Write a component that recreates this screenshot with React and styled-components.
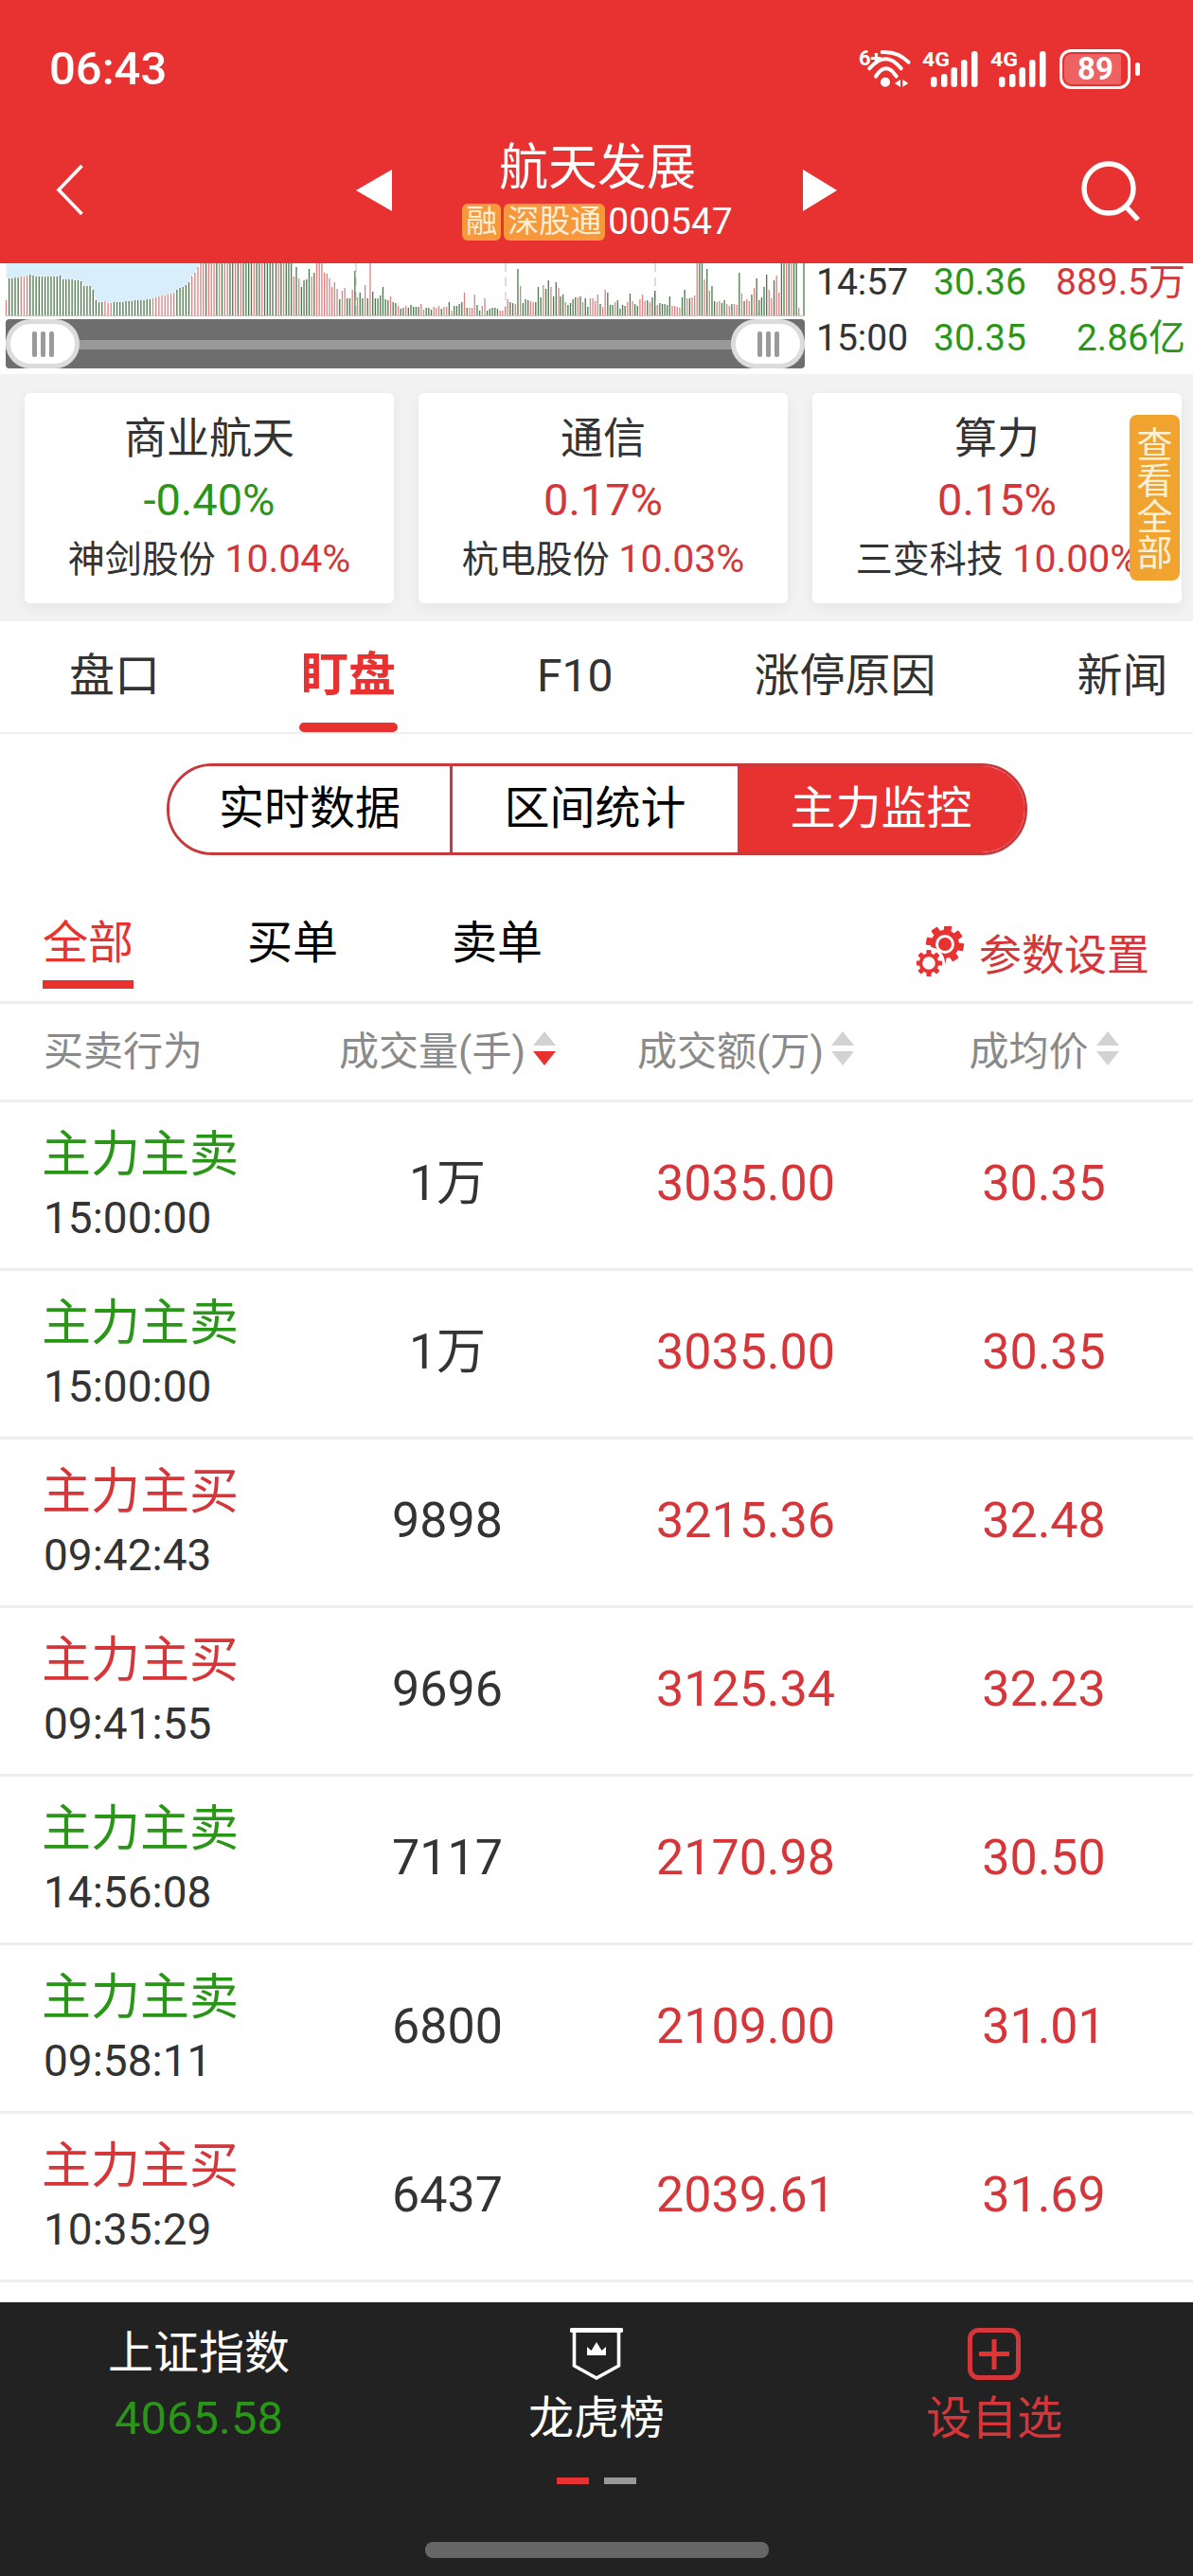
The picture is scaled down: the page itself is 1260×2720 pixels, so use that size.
import React from "react";
import styled, { createGlobalStyle } from "styled-components";

const RED = "#e83232";
const NUM_RED = "#d4363a";
const GREEN = "#2a9618";
const FONT = `Roboto, "Noto Sans CJK SC", sans-serif`;

// 分时量柱, negative = red bar
const BAR_SEGMENTS = [
  {
    from: 6.5,
    to: 209,
    bars: [
      -17, 40, 40, 41, 41, -42, -42, -43, 44, 43, 42, 42, 42, 42, 42, 42, 42, 42, 43, 39, 39, 39, 39, 38, 38, 37, 32, 32,
      32, 28, 17, 15, 15, -16, -14, -14, 15, 15, 15, 15, 16, 16, 16, 17, 17, 17, 17, 18, 18, -19, -20, -21, -22, -22, -23,
      -24, -25, 28, 30, 31, 33, 36, -42, -46, -52,
    ],
  },
  {
    from: 212,
    to: 288,
    bars: [
      -56, -56, 56, -56, -56, -56, 56, -56, 56, -56, -56, 56, 56, -56, 56, -56, 56, 56, 56, 56, -56, 56, 56, -56, 56, 56,
      56, 56,
    ],
  },
  {
    from: 291.5,
    to: 590,
    bars: [
      56, -56, 56, -56, 56, 56, 56, -42, 52, -40, 31, 38, 39, 50, -42, 46, -56, -56, -56, -46, -45, -40, -31, -36, -29, 18,
      -27, -30, 19, 19, -28, 48, -20, 25, 19, -33, 19, -56, 26, 19, 19, 22, 31, 18, 17, -21, 15, 14, -11, 8, 9, -11, 9, 12,
      10, 10, 10, -13, -7, 9, 9, 7, -10, -9, -11, 8, -10, -10, 15, -6, 11, 11, 13, 15, -25, 9, -9, -9, -23, 12, 6, -11, -19,
      6, 8, 9, 9, 8, -6, -6, -10, -18, 15, 14, -13, 50, -32, 14, 18, 17, -16, -15, 15, 31, 20, -33, 29, 38, -31, 21, 36, -30,
    ],
  },
  {
    from: 592,
    to: 849,
    bars: [
      21, 23, -15, 12, 14, 18, 20, -20, 21, -15, 19, 10, -19, -19, -16, -23, 13, -10, -28, 25, 12, 12, -15, 17, 8, 12, 11,
      -15, 24, -16, 13, 11, -18, -23, -16, 17, -15, 20, 27, -12, 14, 13, 13, 12, 21, -11, -11, -10, -9, 20, 28, -19, 19, -20,
      -22, -56, 56, 56, -39, 50, -27, 32, 16, -15, -16, 14, 17, -13, -11, 13, -13, -12, 46, -24, 16, -18, -16, 23, -30, 40,
      17, 20, 31, 44, -28, -19, 38, -43, -25, 56, 56, -56, 56, -56, 56, 56, -9, 0, 56,
    ],
  },
];

const barX = (seg, i) => seg.from + (i * (seg.to - seg.from)) / (seg.bars.length - 1);

// light blue above the first bars, follows their tops
const PRICE_AREA = (() => {
  const seg = BAR_SEGMENTS[0];
  const tops = seg.bars.map((v, i) => `${barX(seg, i)},${i === 0 ? 16 : 56 - Math.abs(v)}`);
  return `6.5,0 ${tops.join(" ")} 211,0`;
})();

const QUOTES = [
  { time: "14:57", price: "30.36", amount: "889.5万", up: true },
  { time: "15:00", price: "30.35", amount: "2.86亿", up: false },
];

const SECTORS = [
  { name: "商业航天", pct: "-0.40%", down: true, stock: "神剑股份", stockPct: "10.04%" },
  { name: "通信", pct: "0.17%", stock: "杭电股份", stockPct: "10.03%" },
  { name: "算力", pct: "0.15%", stock: "三变科技", stockPct: "10.00%" },
];

const ROWS = [
  { buy: false, time: "15:00:00", vol: "1万", amount: "3035.00", avg: "30.35" },
  { buy: false, time: "15:00:00", vol: "1万", amount: "3035.00", avg: "30.35" },
  { buy: true, time: "09:42:43", vol: "9898", amount: "3215.36", avg: "32.48" },
  { buy: true, time: "09:41:55", vol: "9696", amount: "3125.34", avg: "32.23" },
  { buy: false, time: "14:56:08", vol: "7117", amount: "2170.98", avg: "30.50" },
  { buy: false, time: "09:58:11", vol: "6800", amount: "2109.00", avg: "31.01" },
  { buy: true, time: "10:35:29", vol: "6437", amount: "2039.61", avg: "31.69" },
];

function WifiIcon() {
  return (
    <StatusSvg width="54" height="40" viewBox="0 0 54 40">
      <text x="0" y="16" fontSize="22" fontWeight="700" fontFamily="Roboto" fill="#fff">6+</text>
      <g fill="none" stroke="#fff" strokeWidth="4" strokeLinecap="round">
        <path d="M18 27.7 Q28.7 11 39.7 27.7" />
        <path d="M11.3 19.3 Q28.7 -1 44.7 19.3" />
        <path d="M24.7 2 Q41.3 1 52.5 12.7" />
      </g>
      <circle cx="28" cy="33.7" r="5" fill="#fff" />
      <polygon points="38,35 44,31 44,38.7" fill="#fff" />
      <polygon points="46.3,31 46.3,38.7 52.3,35" fill="#fff" />
    </StatusSvg>
  );
}

function SignalIcon() {
  const bars = [
    [9, 11],
    [20, 14],
    [30.5, 21],
    [41, 29],
    [52, 38],
  ];
  return (
    <StatusSvg width="59" height="40" viewBox="0 0 59 40">
      <text x="0" y="17" fontSize="21" fontWeight="700" fontFamily="Roboto" fill="#fff" textLength="29" lengthAdjust="spacingAndGlyphs">4G</text>
      {bars.map(([x, h]) => (
        <rect key={x} x={x} y={39 - h} width="6.5" height={h} rx="3" fill="#fff" />
      ))}
    </StatusSvg>
  );
}

function MiniChart() {
  return (
    <ChartSvg width="850" height="56" viewBox="0 0 850 56">
      <polygon points={PRICE_AREA} fill="#d9eefb" />
      <g stroke="#dddddd" strokeWidth="2" strokeDasharray="9 6">
        <line x1="376" y1="0" x2="376" y2="56" />
        <line x1="534" y1="0" x2="534" y2="56" />
        <line x1="692" y1="0" x2="692" y2="56" />
      </g>
      {BAR_SEGMENTS.map((seg) =>
        seg.bars.map((v, i) => (
          <line
            key={`${seg.from}-${i}`}
            x1={barX(seg, i)}
            x2={barX(seg, i)}
            y1="56"
            y2={56 - Math.abs(v)}
            stroke={v < 0 ? "#dc8080" : "#4a784a"}
            strokeWidth="1.3"
          />
        ))
      )}
      <line x1="6" x2="850" y1="55.5" y2="55.5" stroke="#c4c4c4" />
    </ChartSvg>
  );
}

function GearIcon() {
  const big = [0, 45, 90, 135, 180, 225, 270, 315];
  return (
    <svg width="52" height="54" viewBox="0 0 52 54">
      <g transform="translate(30 19)" fill={RED}>
        {big.map((a) => (
          <rect key={a} x="-4" y="-20" width="8" height="9" rx="1" transform={`rotate(${a + 10})`} />
        ))}
        <circle r="12.5" fill="none" stroke={RED} strokeWidth="5" />
        <circle r="7" />
      </g>
      <circle cx="13" cy="39" r="17" fill="#fff" />
      <g transform="translate(13 39)" fill={RED}>
        {big.map((a) => (
          <rect key={a} x="-2.6" y="-14" width="5.2" height="6" rx="1" transform={`rotate(${a})`} />
        ))}
        <circle r="8.6" fill="none" stroke={RED} strokeWidth="3.6" />
      </g>
    </svg>
  );
}

function SortHead({ children, active }) {
  return (
    <HeadCell>
      {children}
      <SortIcon>
        <Tri />
        <Tri $down $active={active} />
      </SortIcon>
    </HeadCell>
  );
}

export default function App() {
  return (
    <Page>
      <GlobalStyle />

      <Header>
        <StatusBar>
          <Clock>06:43</Clock>
          <StatusIcons>
            <WifiIcon />
            <SignalIcon />
            <SignalIcon />
            <Battery>
              <BatteryLevel>89</BatteryLevel>
            </Battery>
          </StatusIcons>
        </StatusBar>
        <NavBar>
          <NavBack width="30" height="56" viewBox="0 0 30 56">
            <path d="M27.5 2 L3 27.5 L27.5 53" fill="none" stroke="#fff" strokeWidth="3.6" />
          </NavBack>
          <NavCenter>
            <svg width="38" height="44" viewBox="0 0 38 44">
              <polygon points="0,22 38,0 38,44" fill="#fff" />
            </svg>
            <StockTitle>
              <StockName>航天发展</StockName>
              <StockMeta>
                <MetaBadge>融</MetaBadge>
                <MetaBadge>深股通</MetaBadge>
                <StockCode>000547</StockCode>
              </StockMeta>
            </StockTitle>
            <svg width="36" height="44" viewBox="0 0 36 44">
              <polygon points="36,22 0,0 0,44" fill="#fff" />
            </svg>
          </NavCenter>
          <NavSearch width="64" height="64" viewBox="0 0 64 64">
            <circle cx="29" cy="30" r="26" fill="none" stroke="#fff" strokeWidth="5.4" />
            <path d="M47 49 L60 63" fill="none" stroke="#fff" strokeWidth="5.4" />
          </NavSearch>
        </NavBar>
      </Header>

      <ChartStrip>
        <ChartColumn>
          <MiniChart />
          <Slider>
            <SliderBand />
            <SliderHandle>
              <Grip /><Grip /><Grip />
            </SliderHandle>
            <SliderHandle>
              <Grip /><Grip /><Grip />
            </SliderHandle>
          </Slider>
        </ChartColumn>
        <QuoteColumn>
          {QUOTES.map((q) => (
            <QuoteRow key={q.time}>
              <span>{q.time}</span>
              <QuotePrice>{q.price}</QuotePrice>
              <QuoteAmount $up={q.up}>{q.amount}</QuoteAmount>
            </QuoteRow>
          ))}
        </QuoteColumn>
      </ChartStrip>

      <SectorStrip>
        {SECTORS.map((s) => (
          <SectorCard key={s.name}>
            <SectorName>{s.name}</SectorName>
            <SectorPct $down={s.down}>{s.pct}</SectorPct>
            <SectorStock>
              {s.stock} <StockPct>{s.stockPct}</StockPct>
            </SectorStock>
          </SectorCard>
        ))}
        <ViewAll>查看全部</ViewAll>
      </SectorStrip>

      <MainTabs>
        <MainTab>盘口</MainTab>
        <MainTab $active>盯盘</MainTab>
        <MainTab>F10</MainTab>
        <MainTab>涨停原因</MainTab>
        <MainTab>新闻</MainTab>
      </MainTabs>

      <Segmented>
        <SegItem>实时数据</SegItem>
        <SegItem>区间统计</SegItem>
        <SegItem $active>主力监控</SegItem>
      </Segmented>

      <SubBar>
        <SubTab $active>全部</SubTab>
        <SubTab>买单</SubTab>
        <SubTab>卖单</SubTab>
        <Settings>
          <GearIcon />
          参数设置
        </Settings>
      </SubBar>

      <HeadRow>
        <HeadCell $first>买卖行为</HeadCell>
        <SortHead active>成交量(手)</SortHead>
        <SortHead>成交额(万)</SortHead>
        <SortHead>成均价</SortHead>
      </HeadRow>

      {ROWS.map((r, i) => (
        <DataRow key={i}>
          <ActionCell>
            <ActionName $buy={r.buy}>{r.buy ? "主力主买" : "主力主卖"}</ActionName>
            <ActionTime>{r.time}</ActionTime>
          </ActionCell>
          <NumCell>{r.vol}</NumCell>
          <NumCell $red>{r.amount}</NumCell>
          <NumCell $red>{r.avg}</NumCell>
        </DataRow>
      ))}

      <Footer>
        <FooterGrid>
          <FooterItem>
            <IndexName>上证指数</IndexName>
            <IndexValue>4065.58</IndexValue>
          </FooterItem>
          <FooterItem>
            <FooterIcon width="56" height="55" viewBox="0 0 56 55">
              <path d="M2 2.5 H54" stroke="#fff" strokeWidth="5" strokeLinecap="round" />
              <path d="M4.5 3 V40 L28 53 L51.5 40 V3" fill="none" stroke="#fff" strokeWidth="3.6" />
              <path d="M18 29 V20 L22.5 24 L28 15 L33.5 24 L38 20 V29 Z" fill="#fff" />
            </FooterIcon>
            <FooterLabel>龙虎榜</FooterLabel>
          </FooterItem>
          <FooterItem>
            <FooterIcon width="56" height="55" viewBox="0 0 56 55">
              <rect x="2.5" y="2.5" width="51" height="50" rx="9" fill="none" stroke={NUM_RED} strokeWidth="5" />
              <path d="M12 27.5 H44 M28 12 V44" stroke={RED} strokeWidth="5" />
            </FooterIcon>
            <FooterLabel $red>设自选</FooterLabel>
          </FooterItem>
        </FooterGrid>
        <PageDots>
          <PageDot $active />
          <PageDot />
        </PageDots>
        <HomeBar />
      </Footer>
    </Page>
  );
}

const GlobalStyle = createGlobalStyle`
  html, body {
    margin: 0;
    padding: 0;
    background: #fff;
  }
  * {
    box-sizing: border-box;
  }
`;

const Page = styled.div`
  width: 1260px;
  height: 2720px;
  overflow: hidden;
  background: #fff;
  font-family: ${FONT};
  color: #333;
`;

const Header = styled.header`
  background: ${RED};
  color: #fff;
  height: 278px;
`;

const StatusBar = styled.div`
  height: 143px;
  padding: 3px 66px 0 52px;
  display: flex;
  align-items: center;
  justify-content: space-between;
`;

const Clock = styled.div`
  font-size: 49px;
  font-weight: 500;
  line-height: 60px;
`;

const StatusIcons = styled.div`
  display: flex;
  align-items: center;
  gap: 13px;
`;

const StatusSvg = styled.svg`
  overflow: visible;
  display: block;
`;

const Battery = styled.div`
  position: relative;
  width: 75px;
  height: 42px;
  border: 3px solid #fff;
  border-radius: 12px;
  padding: 2px;
  margin-left: 1px;
  &::after {
    content: "";
    position: absolute;
    right: -13px;
    top: 11px;
    width: 5px;
    height: 14px;
    border-radius: 3px;
    background: #fff;
  }
`;

const BatteryLevel = styled.div`
  width: 60px;
  height: 32px;
  border-radius: 8px 2px 2px 8px;
  background: rgba(255, 255, 255, 0.24);
  font-size: 33px;
  line-height: 32px;
  font-weight: 700;
  text-align: center;
  padding-left: 6px;
`;

const NavBar = styled.div`
  height: 135px;
  padding: 0 54px 19px;
  display: grid;
  grid-template-columns: 1fr auto 1fr;
  align-items: center;
`;

const NavBack = styled.svg`
  margin-left: 5px;
`;

const NavSearch = styled.svg`
  justify-self: end;
`;

const NavCenter = styled.div`
  display: flex;
  align-items: center;
  gap: 74px;
`;

const StockTitle = styled.div`
  display: flex;
  flex-direction: column;
  align-items: center;
  align-self: flex-start;
`;

const StockName = styled.div`
  font-size: 52px;
  line-height: 60px;
`;

const StockMeta = styled.div`
  display: flex;
  align-items: center;
  gap: 3px;
  margin-top: 7px;
`;

const MetaBadge = styled.span`
  height: 39px;
  padding: 0 4px;
  border-radius: 6px;
  background: #f7983c;
  color: #ffeed6;
  font-size: 33px;
  line-height: 38px;
`;

const StockCode = styled.span`
  font-size: 39px;
  line-height: 39px;
`;

const ChartStrip = styled.section`
  display: flex;
  height: 117px;
`;

const ChartColumn = styled.div`
  width: 856px;
`;

const ChartSvg = styled.svg`
  display: block;
`;

const Slider = styled.div`
  position: relative;
  width: 844px;
  height: 52px;
  margin: 3px 0 0 6px;
  background: #6e6e6e;
  border-radius: 4px;
  display: flex;
  align-items: center;
  justify-content: space-between;
`;

const SliderBand = styled.div`
  position: absolute;
  left: 0;
  right: 0;
  top: 22px;
  height: 10px;
  background: #999;
`;

const SliderHandle = styled.div`
  position: relative;
  width: 78px;
  height: 52px;
  border: 5px solid #dcdcdc;
  border-radius: 26px;
  background: #fff;
  display: flex;
  align-items: center;
  justify-content: center;
  gap: 4px;
`;

const Grip = styled.i`
  width: 5px;
  height: 27px;
  border-radius: 2px;
  background: #9a9a9a;
`;

const QuoteColumn = styled.div`
  flex: 1;
  padding: 0 8px 0 6px;
  display: flex;
  flex-direction: column;
  gap: 19px;
`;

const QuoteRow = styled.div`
  display: grid;
  grid-template-columns: 124px 100px 1fr;
  font-size: 39px;
  line-height: 40px;
`;

const QuotePrice = styled.span`
  color: ${GREEN};
`;

const QuoteAmount = styled.span`
  text-align: right;
  color: ${(p) => (p.$up ? NUM_RED : GREEN)};
`;

const SectorStrip = styled.section`
  position: relative;
  height: 261px;
  padding: 20px 12px 19px 26px;
  background: #f2f2f2;
  display: grid;
  grid-template-columns: repeat(3, 390px);
  gap: 26px;
`;

const SectorCard = styled.div`
  background: #fff;
  border-radius: 6px;
  box-shadow: 0 4px 14px rgba(0, 0, 0, 0.06);
  padding-top: 22px;
  text-align: center;
  white-space: nowrap;
`;

const SectorName = styled.div`
  font-size: 45px;
  line-height: 54px;
`;

const SectorPct = styled.div`
  margin-top: 12px;
  font-size: 47px;
  line-height: 50px;
  color: ${(p) => (p.$down ? GREEN : NUM_RED)};
`;

const SectorStock = styled.div`
  margin-top: 12px;
  font-size: 39px;
  line-height: 50px;
`;

const StockPct = styled.span`
  font-size: 41px;
  color: ${NUM_RED};
`;

const ViewAll = styled.div`
  position: absolute;
  right: 14px;
  top: 43px;
  width: 53px;
  height: 175px;
  padding-right: 8px;
  border-radius: 8px;
  background: #f0a42f;
  color: #fdf0d8;
  font-size: 38px;
  line-height: 45px;
  text-align: center;
  writing-mode: vertical-rl;
`;

const MainTabs = styled.nav`
  height: 119px;
  padding-left: 73px;
  border-bottom: 2px solid #eee;
  display: flex;
  gap: 149px;
`;

const MainTab = styled.div`
  position: relative;
  height: 117px;
  font-size: ${(p) => (p.$active ? "50px" : "48px")};
  line-height: 115px;
  font-weight: ${(p) => (p.$active ? 700 : 400)};
  color: ${(p) => (p.$active ? RED : "#333")};
  &::after {
    content: "";
    display: ${(p) => (p.$active ? "block" : "none")};
    position: absolute;
    left: -2px;
    right: -2px;
    bottom: 0;
    height: 10px;
    border-radius: 5px;
    background: ${RED};
  }
`;

const Segmented = styled.div`
  width: 909px;
  height: 97px;
  margin: 31px 0 0 176px;
  border: 3px solid #c8393c;
  border-radius: 48px;
  overflow: hidden;
  display: grid;
  grid-template-columns: 299px 301px 1fr;
`;

const SegItem = styled.div`
  font-size: 48px;
  line-height: 90px;
  text-align: center;
  color: ${(p) => (p.$active ? "#fff" : "#000")};
  background: ${(p) => (p.$active ? RED : "#fff")};
  &:first-child {
    border-right: 3px solid #c8393c;
  }
`;

const SubBar = styled.div`
  height: 154px;
  padding: 63px 46px 0 45px;
  display: flex;
  gap: 120px;
`;

const SubTab = styled.div`
  position: relative;
  font-size: 48px;
  line-height: 60px;
  height: 60px;
  color: ${(p) => (p.$active ? RED : "#000")};
  &::after {
    content: "";
    display: ${(p) => (p.$active ? "block" : "none")};
    position: absolute;
    left: 0;
    right: 0;
    top: 69px;
    height: 9px;
    background: ${RED};
  }
`;

const Settings = styled.div`
  margin-left: auto;
  margin-top: 9px;
  height: 60px;
  display: flex;
  align-items: center;
  gap: 14px;
  font-size: 45px;
  color: #d4363a;
`;

const HeadRow = styled.div`
  height: 107px;
  border-top: 3px solid #eee;
  border-bottom: 3px solid #eee;
  display: grid;
  grid-template-columns: repeat(4, 315px);
`;

const HeadCell = styled.div`
  display: flex;
  align-items: center;
  justify-content: ${(p) => (p.$first ? "flex-start" : "center")};
  gap: 8px;
  padding-left: ${(p) => (p.$first ? "46px" : "0")};
  padding-bottom: 8px;
  font-size: 42px;
  color: #8a8a8a;
`;

const SortIcon = styled.div`
  display: flex;
  flex-direction: column;
  gap: 6px;
`;

const Tri = styled.i`
  width: 0;
  height: 0;
  border-left: 12.5px solid transparent;
  border-right: 12.5px solid transparent;
  border-bottom: ${(p) => (p.$down ? "0" : "15px solid #d2d2d2")};
  border-top: ${(p) => (p.$down ? `15px solid ${p.$active ? RED : "#d2d2d2"}` : "0")};
`;

const DataRow = styled.div`
  height: 178px;
  border-bottom: 3px solid #eee;
  display: grid;
  grid-template-columns: repeat(4, 315px);
  align-items: center;
`;

const ActionCell = styled.div`
  padding-left: 46px;
`;

const ActionName = styled.div`
  margin-left: -2px;
  font-size: 52px;
  line-height: 68px;
  color: ${(p) => (p.$buy ? NUM_RED : GREEN)};
`;

const ActionTime = styled.div`
  font-size: 46px;
  line-height: 64px;
`;

const NumCell = styled.div`
  text-align: center;
  padding-bottom: 3px;
  font-size: 52px;
  line-height: 60px;
  color: ${(p) => (p.$red ? NUM_RED : "#333")};
`;

const Footer = styled.footer`
  height: 289px;
  margin-top: 21px;
  background: #222;
  overflow: hidden;
`;

const FooterGrid = styled.div`
  display: grid;
  grid-template-columns: repeat(3, 420px);
  padding-top: 22px;
  height: 185px;
`;

const FooterItem = styled.div`
  display: flex;
  flex-direction: column;
  align-items: center;
`;

const IndexName = styled.div`
  font-size: 48px;
  line-height: 64px;
  color: #fff;
`;

const IndexValue = styled.div`
  margin-top: 7px;
  font-size: 49px;
  line-height: 60px;
  color: ${GREEN};
`;

const FooterIcon = styled.svg`
  display: block;
  margin-top: 5px;
`;

const FooterLabel = styled.div`
  margin-top: 11px;
  font-size: 48px;
  line-height: 60px;
  color: ${(p) => (p.$red ? NUM_RED : "#fff")};
`;

const PageDots = styled.div`
  display: flex;
  justify-content: center;
  gap: 16px;
`;

const PageDot = styled.i`
  width: 34px;
  height: 7px;
  background: ${(p) => (p.$active ? RED : "#9a9a9a")};
`;

const HomeBar = styled.div`
  width: 363px;
  height: 17px;
  margin: 61px auto 0;
  border-radius: 8px;
  background: #666;
`;
